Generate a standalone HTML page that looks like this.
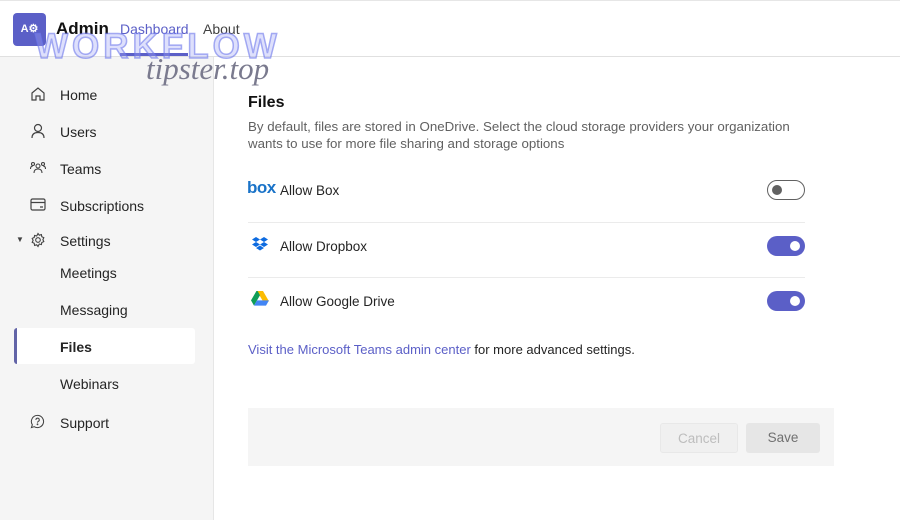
<!DOCTYPE html>
<html><head><meta charset="utf-8"><style>
*{margin:0;padding:0;box-sizing:border-box}
body{width:900px;height:520px;overflow:hidden;background:#fff;font-family:"Liberation Sans",sans-serif;color:#242424;position:relative}
.top{position:absolute;left:0;top:0;width:900px;height:57px;border-top:1px solid #e6e6e6;border-bottom:1px solid #e0e0e0;background:#fff}
.logo{position:absolute;left:13px;top:12px;width:33px;height:33px;background:#5b5fc7;border-radius:4px;color:#fff;font-size:11px;font-weight:bold;text-align:center;line-height:33px}
.admin{position:absolute;left:56px;top:18px;font-size:17px;font-weight:bold;color:#111}
.nav{position:absolute;top:20px;font-size:14px}
.side{position:absolute;left:0;top:57px;width:214px;height:463px;background:#f5f5f5;border-right:1px solid #e6e6e6}
.item{position:absolute;left:60px;font-size:14px;color:#242424}
.ic{position:absolute;left:30px}
.sel{position:absolute;left:14px;top:271px;width:181px;height:36px;background:#fff;border-radius:3px;border-left:3px solid #6264a7}
.h{position:absolute;left:248px;top:94px;font-size:16px;font-weight:bold;color:#111}
.p{position:absolute;left:248px;top:118px;width:560px;font-size:13.3px;line-height:17px;color:#616161}
.row{position:absolute;left:280px;font-size:13.5px;color:#242424}
.line{position:absolute;left:248px;width:557px;height:1px;background:#ebebeb}
.tg{position:absolute;left:767px;width:38px;height:20px;border-radius:10px}
.off{border:1px solid #616161;background:#fff}
.off:after{content:"";position:absolute;left:4px;top:4px;width:10px;height:10px;border-radius:50%;background:#616161}
.on{background:#5b5fc7}
.on:after{content:"";position:absolute;right:5px;top:5px;width:10px;height:10px;border-radius:50%;background:#fff}
.bar{position:absolute;left:248px;top:408px;width:586px;height:58px;background:#f5f5f5}
.btn{position:absolute;top:423px;height:30px;border-radius:3px;font-size:13.5px;text-align:center;line-height:30px}
</style></head><body>
<div class="top">
<div class="logo">A⚙</div>
<div class="admin">Admin</div>
<div class="nav" style="left:120px;color:#5b5fc7">Dashboard</div>
<div style="position:absolute;left:120px;top:52px;width:68px;height:3px;background:#5b5fc7"></div>
<div class="nav" style="left:203px;color:#424242">About</div>
</div>
<div class="side">
<div class="sel"></div>
</div>
<svg class="ic" style="top:86px" width="16" height="16" viewBox="0 0 16 16" fill="none" stroke="#424242" stroke-width="1.2"><path d="M2 7L8 2l6 5v7H10V10H6v4H2z"/></svg>
<div class="item" style="top:87px">Home</div>
<svg class="ic" style="top:123px" width="16" height="16" viewBox="0 0 16 16" fill="none" stroke="#424242" stroke-width="1.2"><circle cx="8" cy="5" r="3.5"/><path d="M2 15c0-4 2.5-5.5 6-5.5s6 1.5 6 5.5"/></svg>
<div class="item" style="top:124px">Users</div>
<svg class="ic" style="top:161px" width="16" height="14" viewBox="0 0 16 14" fill="none" stroke="#424242" stroke-width="1.1"><circle cx="8" cy="5" r="2"/><circle cx="3" cy="3" r="1.5"/><circle cx="13" cy="3" r="1.5"/><path d="M4 12c0-3 2-4 4-4s4 1 4 4M0.5 8c0-2 1-3 2.5-3M15.5 8c0-2-1-3-2.5-3"/></svg>
<div class="item" style="top:161px">Teams</div>
<svg class="ic" style="top:198px" width="16" height="13" viewBox="0 0 16 13" fill="none" stroke="#424242" stroke-width="1.2"><rect x="1" y="1" width="14" height="11" rx="1.5"/><path d="M1 4.5h14M10 9h3"/></svg>
<div class="item" style="top:198px">Subscriptions</div>
<div style="position:absolute;left:16px;top:235px;font-size:8px;color:#424242">▼</div>
<svg class="ic" style="top:232px" width="16" height="16" viewBox="0 0 16 16" fill="none" stroke="#424242" stroke-width="1.1"><circle cx="8" cy="8" r="2.3"/><path d="M8 1.5l1.3 1.7 2.1-.6.4 2.1 2 .9-.9 2 .9 2-2 .9-.4 2.1-2.1-.6L8 14.5l-1.3-1.7-2.1.6-.4-2.1-2-.9.9-2-.9-2 2-.9.4-2.1 2.1.6z"/></svg>
<div class="item" style="top:233px">Settings</div>
<div class="item" style="top:265px">Meetings</div>
<div class="item" style="top:302px">Messaging</div>
<div class="item" style="top:339px;font-weight:bold">Files</div>
<div class="item" style="top:376px">Webinars</div>
<svg class="ic" style="top:414px" width="15" height="15" viewBox="0 0 16 16" fill="none" stroke="#424242" stroke-width="1.1"><path d="M8 1.5a6.5 6.5 0 1 1-3.5 12L1.5 14.5l1-3A6.5 6.5 0 0 1 8 1.5z"/><path d="M6.3 6.3a1.8 1.8 0 1 1 2.5 1.6c-.6.3-.8.6-.8 1.3"/><circle cx="8" cy="11" r=".4" fill="#424242"/></svg>
<div class="item" style="top:415px">Support</div>

<div class="h">Files</div>
<div class="p">By default, files are stored in OneDrive. Select the cloud storage providers your organization wants to use for more file sharing and storage options</div>

<div style="position:absolute;left:247px;top:178px;font-size:17px;font-weight:bold;color:#1a73c8;letter-spacing:-0.5px">box</div>
<div class="row" style="top:183px">Allow Box</div>
<div class="tg off" style="top:180px"></div>
<div class="line" style="top:222px"></div>
<svg style="position:absolute;left:252px;top:237px" width="16" height="14" viewBox="0 0 16 14" fill="#0d6be0"><path d="M4 0L0 2.5 4 5 8 2.5zM12 0L8 2.5 12 5 16 2.5zM0 7.5L4 10 8 7.5 4 5zM16 7.5L12 10 8 7.5 12 5zM4 11L8 13.5 12 11 8 8.5z"/></svg>
<div class="row" style="top:239px">Allow Dropbox</div>
<div class="tg on" style="top:236px"></div>
<div class="line" style="top:277px"></div>
<svg style="position:absolute;left:251px;top:291px" width="18" height="15" viewBox="0 0 18 15"><path d="M6 0h6l6 10.4h-6z" fill="#fbbc04"/><path d="M6 0l3 5.2L3 15.6 0 10.4z" fill="#0f9d58" transform="translate(0,-1)"/><path d="M3 14.6l3-5.2h12l-3 5.2z" fill="#4285f4"/></svg>
<div class="row" style="top:294px">Allow Google Drive</div>
<div class="tg on" style="top:291px"></div>

<div style="position:absolute;left:248px;top:342px;font-size:13px;color:#242424"><span style="color:#5b5fc7">Visit the Microsoft Teams admin center</span> for more advanced settings.</div>

<div class="bar"></div>
<div class="btn" style="left:660px;width:78px;background:#f0f0f0;border:1px solid #e8e8e8;color:#bdbdbd">Cancel</div>
<div class="btn" style="left:746px;width:74px;background:#e6e6e6;color:#707070">Save</div>

<div style="position:absolute;left:35px;top:27px;font-size:35px;font-weight:bold;color:rgba(160,165,245,0.35);-webkit-text-stroke:1.5px rgba(110,120,235,0.6);letter-spacing:4px">WORKFLOW</div>
<div style="position:absolute;left:146px;top:51px;font-size:31px;font-style:italic;font-family:'Liberation Serif',serif;color:#7a7a8e">tipster.top</div>
</body></html>
